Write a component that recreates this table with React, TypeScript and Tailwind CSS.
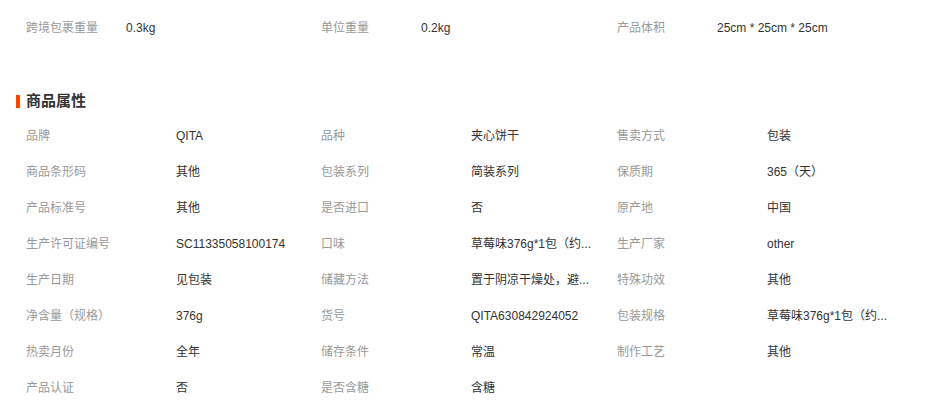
import React from "react";

const top = [
  ["跨境包裹重量", "0.3kg"],
  ["单位重量", "0.2kg"],
  ["产品体积", "25cm * 25cm * 25cm"],
];

const attrs: [string, string][] = [
  ["品牌", "QITA"],
  ["品种", "夹心饼干"],
  ["售卖方式", "包装"],
  ["商品条形码", "其他"],
  ["包装系列", "简装系列"],
  ["保质期", "365（天）"],
  ["产品标准号", "其他"],
  ["是否进口", "否"],
  ["原产地", "中国"],
  ["生产许可证编号", "SC11335058100174"],
  ["口味", "草莓味376g*1包（约..."],
  ["生产厂家", "other"],
  ["生产日期", "见包装"],
  ["储藏方法", "置于阴凉干燥处，避..."],
  ["特殊功效", "其他"],
  ["净含量（规格）", "376g"],
  ["货号", "QITA630842924052"],
  ["包装规格", "草莓味376g*1包（约..."],
  ["热卖月份", "全年"],
  ["储存条件", "常温"],
  ["制作工艺", "其他"],
  ["产品认证", "否"],
  ["是否含糖", "含糖"],
];

export default function App() {
  return (
    <div
      className="w-[935px] h-[402px] bg-white overflow-hidden text-[12px]"
      style={{ fontFamily: '"Liberation Sans", "Noto Sans CJK SC", sans-serif' }}
    >
      <div className="pt-[10px] pl-[26px]">
        <div className="grid grid-cols-[295px_296px_296px]">
          {top.map(([k, v]) => (
            <div key={k} className="flex h-[36px] items-center">
              <span className="w-[100px] text-[#999]">{k}</span>
              <span className="text-[#333]">{v}</span>
            </div>
          ))}
        </div>
      </div>
      <div className="mt-[45px] pl-[16px] flex items-center h-[20px] gap-[6px]">
        <div className="w-[4px] h-[13px] bg-[#ff4400]" />
        <h3 className="text-[15px] font-bold text-[#333] leading-[20px]">商品属性</h3>
      </div>
      <div className="mt-[7px] pl-[26px]">
        <div className="grid grid-cols-[295px_296px_296px]">
          {attrs.map(([k, v], i) => (
            <div key={i} className="flex h-[36px] items-center">
              <span className="w-[150px] text-[#999] whitespace-nowrap">{k}</span>
              <span className="text-[#333] whitespace-nowrap">{v}</span>
            </div>
          ))}
        </div>
      </div>
    </div>
  );
}
